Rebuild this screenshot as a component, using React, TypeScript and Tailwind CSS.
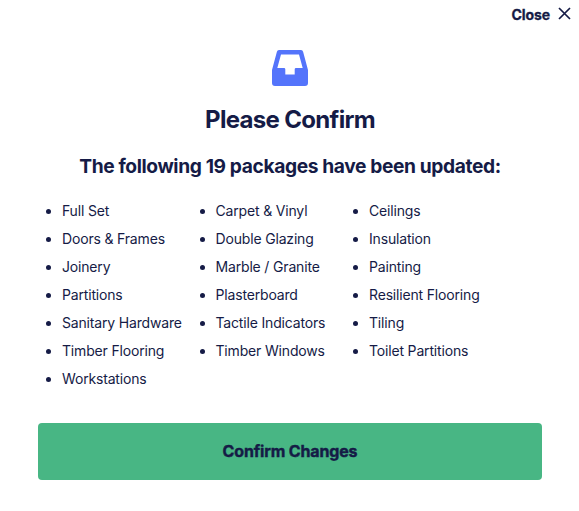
const PACKAGES = [
  ['Full Set', 'Doors & Frames', 'Joinery', 'Partitions', 'Sanitary Hardware', 'Timber Flooring', 'Workstations'],
  ['Carpet & Vinyl', 'Double Glazing', 'Marble / Granite', 'Plasterboard', 'Tactile Indicators', 'Timber Windows'],
  ['Ceilings', 'Insulation', 'Painting', 'Resilient Flooring', 'Tiling', 'Toilet Partitions'],
];

function InboxIcon() {
  return (
    <svg width="36" height="36" viewBox="0 0 36 36" fill="#5474fb" aria-hidden="true">
      <path fillRule="evenodd" d="M7 0h22a2.2 2.2 0 0 1 2.1 1.7L36 20v13a3 3 0 0 1-3 3H3a3 3 0 0 1-3-3V20L4.9 1.7A2.2 2.2 0 0 1 7 0Zm2 4.4L5.3 18H12a1.3 1.3 0 0 1 1.3 1.3v5.2h9.4v-5.2A1.3 1.3 0 0 1 24 18h6.7L27 4.4Z" />
    </svg>
  );
}

export default function App() {
  const count = PACKAGES.flat().length;

  return (
    <div className="relative flex h-[511px] w-[579px] flex-col items-center bg-white pl-[38px] pr-[37px] pt-[50px] font-['Inter',sans-serif] text-[#151b46]">
      <button className="absolute right-[8px] top-[5px] flex items-center gap-[8px] text-sm font-bold leading-5 tracking-[-0.1px] [-webkit-text-stroke:0.3px_currentColor]">
        Close
        <svg className="-mt-[3px]" width="13" height="13" viewBox="0 0 13 13" fill="none" stroke="currentColor" strokeWidth="1.7">
          <path d="M1 1l11 11M12 1L1 12" />
        </svg>
      </button>

      <InboxIcon />
      <h1 className="mt-[18px] text-2xl font-bold leading-8 tracking-[-0.68px]">Please Confirm</h1>
      <h2 className="mt-4 whitespace-nowrap text-[19.2px] font-bold leading-7 tracking-[-0.38px]">The following {count} packages have been updated:</h2>

      <div className="mt-[17px] grid w-full grid-cols-[153.5px_153.5px_1fr]">
        {PACKAGES.map((column) => (
          <ul key={column[0]} className="list-disc pl-6 text-sm leading-7 tracking-[-0.17px]">
            {column.map((name) => <li key={name} className="whitespace-nowrap">{name}</li>)}
          </ul>
        ))}
      </div>

      <button className="mt-[30px] h-[57px] w-full rounded-[4px] bg-[#48b684] pb-0.5 text-base font-bold tracking-[-0.15px] [-webkit-text-stroke:0.4px_currentColor]">Confirm Changes</button>
    </div>
  );
}
